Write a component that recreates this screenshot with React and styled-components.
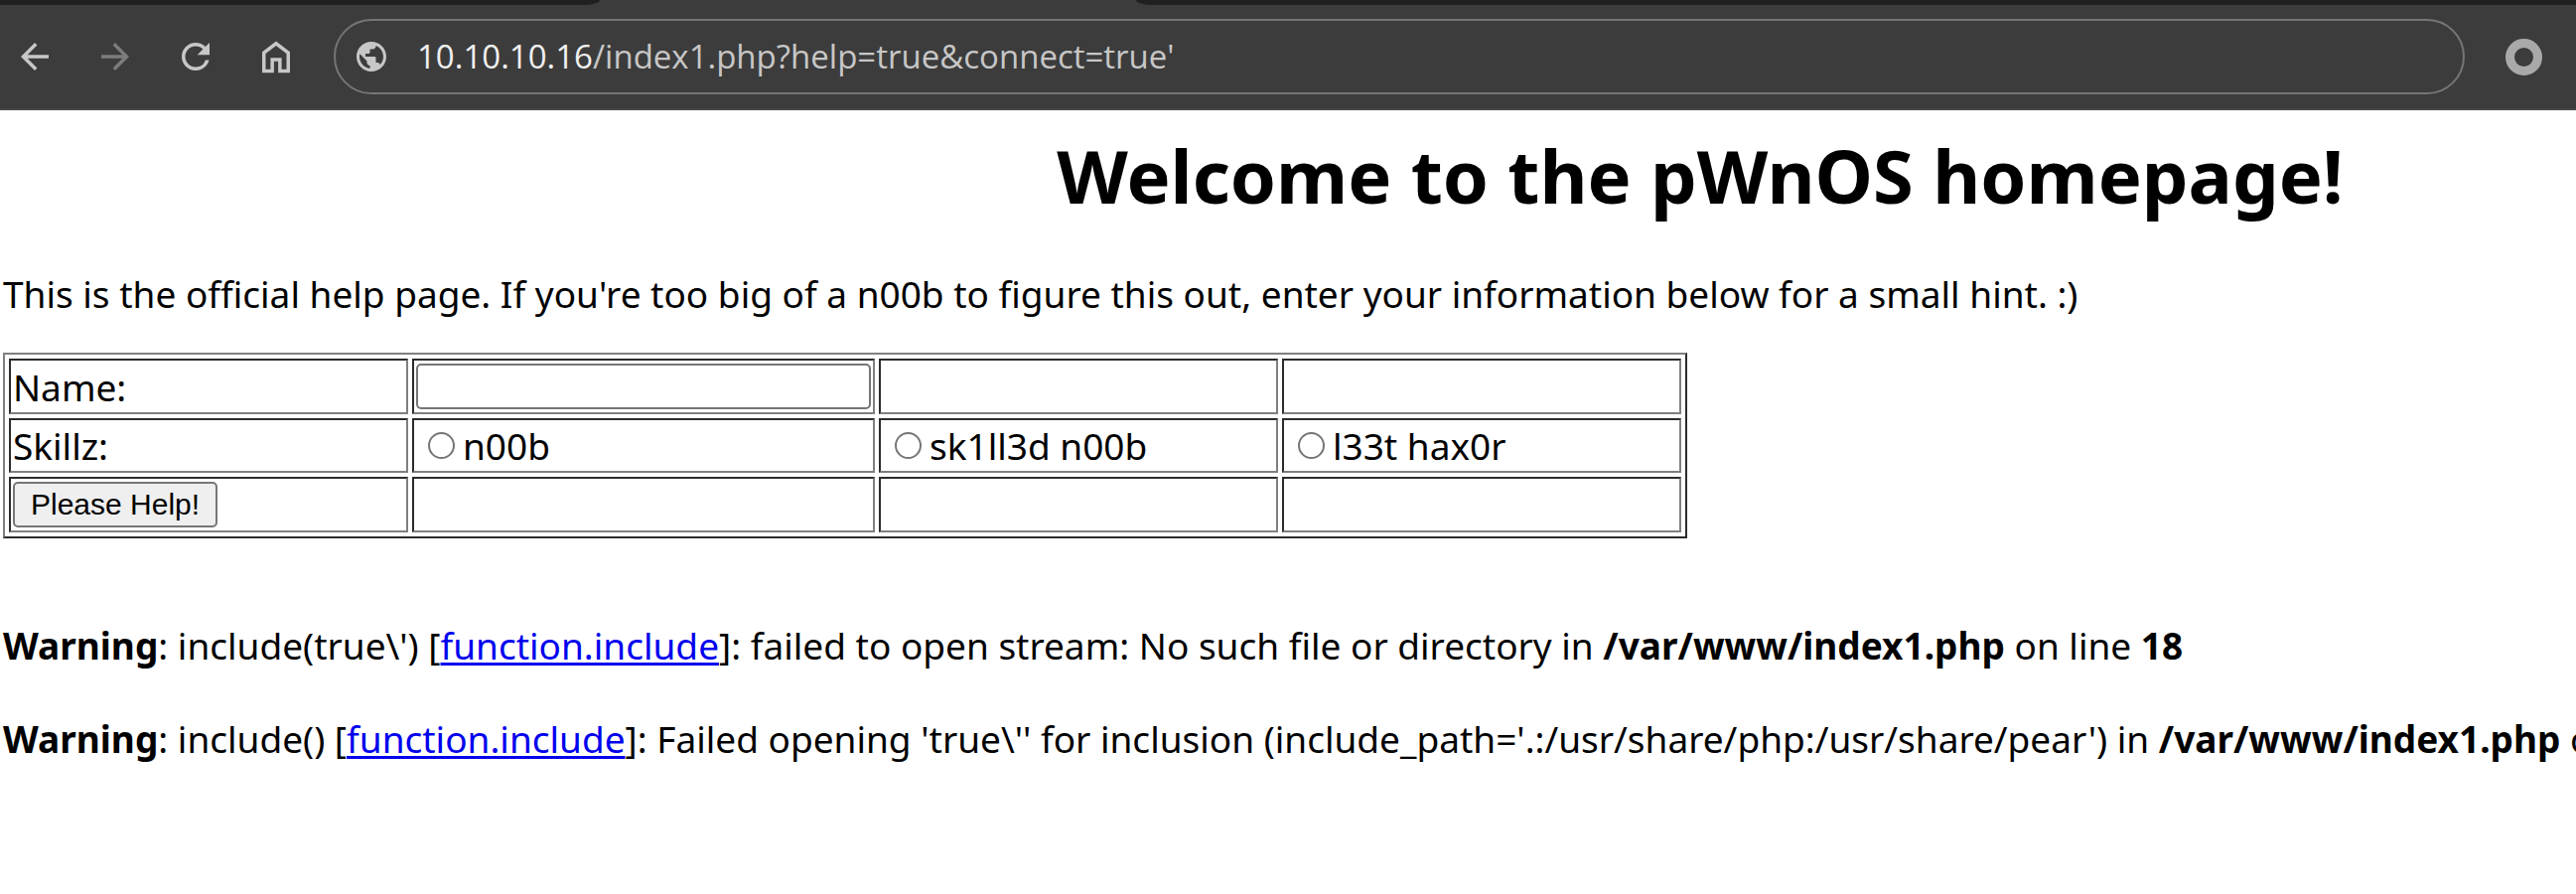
import React from "react";
import styled, { createGlobalStyle } from "styled-components";
import { MdArrowBack, MdArrowForward, MdRefresh, MdPublic } from "react-icons/md";

const GlobalStyle = createGlobalStyle`
  *, *::before, *::after { box-sizing: border-box; }
  body {
    margin: 0;
    background: #fff;
    color: #000;
    font-family: "Noto Sans", "Open Sans", sans-serif;
    font-size: 37px;
    line-height: 47px;
  }
  #root { overflow-x: hidden; }
`;

const TabStrip = styled.div`
  display: flex;
  height: 5px;
  background: #3c3c3c;
`;

const InactiveTabs = styled.div`
  flex: ${(p) => (p.$fill ? "1" : "0 0 604px")};
  margin-left: ${(p) => (p.$fill ? "540px" : "0")};
  background: #1f2120;
  border-radius: ${(p) => (p.$fill ? "0 0 0 16px / 0 0 0 5px" : "0 0 16px 0 / 0 0 5px 0")};
`;

const Toolbar = styled.nav`
  display: flex;
  align-items: center;
  height: 106px;
  padding: 0 34px 0 14px;
  background: #3c3c3c;
  border-bottom: 2px solid #484848;
`;

const NavButton = styled.button`
  display: flex;
  align-items: center;
  justify-content: center;
  width: 42px;
  height: 42px;
  margin-right: 39px;
  padding: 0;
  border: 0;
  background: none;
  color: #c7c7c7;
  &:disabled { color: #7c7c7c; }
`;

const AddressBar = styled.div`
  display: flex;
  flex: 1;
  align-items: center;
  gap: 28px;
  height: 76px;
  margin-left: -2px;
  padding: 0 18px;
  border: 2px solid #757575;
  border-radius: 38px;
  color: #c7c7c7;
`;

const Address = styled.div`
  flex: 1;
  font-family: "Open Sans", "Noto Sans", sans-serif;
  font-size: 33px;
  line-height: 44px;
  white-space: nowrap;
  outline: none;
`;

const Host = styled.span`
  color: #f0f0f0;
`;

const ProfileButton = styled.button`
  width: 37px;
  height: 37px;
  margin-left: 41px;
  padding: 0;
  border: 9px solid #a9a9a9;
  border-radius: 50%;
  background: none;
`;

/* The document is wider than the window: its lines never wrap. */
const Page = styled.main`
  width: 132%;
  padding: 14px 3px 0;
  white-space: nowrap;
`;

const Title = styled.h1`
  margin: 0;
  font-size: 74px;
  line-height: 104px;
  font-weight: 700;
  text-align: center;
`;

const Intro = styled.p`
  margin: 43px 0 36px;
`;

const FormTable = styled.table`
  width: 1696px;
  margin-bottom: 84px;
  table-layout: fixed;
  border: 2px solid;
  border-color: #808080 #2b2b2b #2b2b2b #808080;
  border-collapse: separate;
  border-spacing: 4px;
`;

const Column = styled.col`
  width: ${(p) => (p.$wide ? "466px" : "402px")};
`;

const Row = styled.tr`
  height: ${(p) => (p.$short ? "55px" : "56px")};
`;

const Cell = styled.td`
  padding: 0 2px;
  border: 2px solid;
  border-color: #2b2b2b #808080 #808080 #2b2b2b;
  vertical-align: middle;
`;

const NameInput = styled.input`
  display: block;
  width: 100%;
  height: 46px;
  padding: 2px 4px;
  border: 2px solid #767676;
  border-radius: 5px;
  background: #fff;
  font: 30px "Liberation Sans", Arial, sans-serif;
`;

const Choice = styled.label`
  display: flex;
  align-items: center;
  gap: 8px;
  padding-left: 12px;
`;

const Radio = styled.input`
  appearance: none;
  width: 27px;
  height: 27px;
  margin: 0;
  border: 2px solid #767676;
  border-radius: 50%;
  background: #fff;
  &:checked { background: radial-gradient(#0075ff 50%, #fff 55%); }
`;

const SubmitButton = styled.button`
  display: block;
  height: 46px;
  padding: 0 16px;
  border: 2px solid #767676;
  border-radius: 5px;
  background: #efefef;
  color: #000;
  font: 30px "Liberation Sans", Arial, sans-serif;
`;

const Warning = styled.p`
  margin: 0 0 47px;
`;

const DocLink = styled.a`
  color: #0000ee;
  text-decoration: underline;
  text-decoration-thickness: 3px;
  text-underline-offset: 3px;
  text-decoration-skip-ink: none;
`;

const HomeIcon = () => (
  <svg width="43" height="43" viewBox="0 0 24 24" fill="currentColor" aria-hidden="true">
    <path d="M4 21V9l8-6.2L20 9v12h-6.8v-6.6h-2.4V21zm2-2h2.8v-6.6h6.4V19H18v-9l-6-4.6L6 10z" />
  </svg>
);

const SkillChoice = ({ children }) => (
  <Choice>
    <Radio type="radio" name="skill" value={children} />
    {children}
  </Choice>
);

const IncludeLink = () => <DocLink href="#function.include">function.include</DocLink>;

export default function App() {
  return (
    <>
      <GlobalStyle />
      <header>
        <TabStrip>
          <InactiveTabs />
          <InactiveTabs $fill />
        </TabStrip>
        <Toolbar>
          <NavButton type="button" aria-label="Back"><MdArrowBack size={42} /></NavButton>
          <NavButton type="button" aria-label="Forward" disabled><MdArrowForward size={42} /></NavButton>
          <NavButton type="button" aria-label="Reload"><MdRefresh size={42} /></NavButton>
          <NavButton type="button" aria-label="Home"><HomeIcon /></NavButton>
          <AddressBar>
            <MdPublic size={36} />
            <Address role="textbox" aria-label="Address" tabIndex={0}>
              <Host>10.10.10.16</Host>/index1.php?help=true&amp;connect=true'
            </Address>
          </AddressBar>
          <ProfileButton type="button" aria-label="Profile" />
        </Toolbar>
      </header>
      <Page>
        <Title>Welcome to the pWnOS homepage!</Title>
        <Intro>
          This is the official help page. If you're too big of a n00b to figure this out, enter your
          information below for a small hint. :)
        </Intro>
        <form onSubmit={(e) => e.preventDefault()}>
          <FormTable>
            <colgroup>
              <Column />
              <Column $wide />
              <Column />
              <Column />
            </colgroup>
            <tbody>
              <Row>
                <Cell><label htmlFor="name">Name:</label></Cell>
                <Cell><NameInput id="name" type="text" name="name" /></Cell>
                <Cell />
                <Cell />
              </Row>
              <Row $short>
                <Cell>Skillz:</Cell>
                <Cell><SkillChoice>n00b</SkillChoice></Cell>
                <Cell><SkillChoice>sk1ll3d n00b</SkillChoice></Cell>
                <Cell><SkillChoice>l33t hax0r</SkillChoice></Cell>
              </Row>
              <Row>
                <Cell><SubmitButton type="submit">Please Help!</SubmitButton></Cell>
                <Cell />
                <Cell />
                <Cell />
              </Row>
            </tbody>
          </FormTable>
        </form>
        <Warning>
          <b>Warning</b>: include(true\') [<IncludeLink />]: failed to open stream: No such file or
          directory in <b>/var/www/index1.php</b> on line <b>18</b>
        </Warning>
        <Warning>
          <b>Warning</b>: include() [<IncludeLink />]: Failed opening 'true\'' for inclusion
          (include_path='.:/usr/share/php:/usr/share/pear') in <b>/var/www/index1.php</b> on line{" "}
          <b>18</b>
        </Warning>
      </Page>
    </>
  );
}
